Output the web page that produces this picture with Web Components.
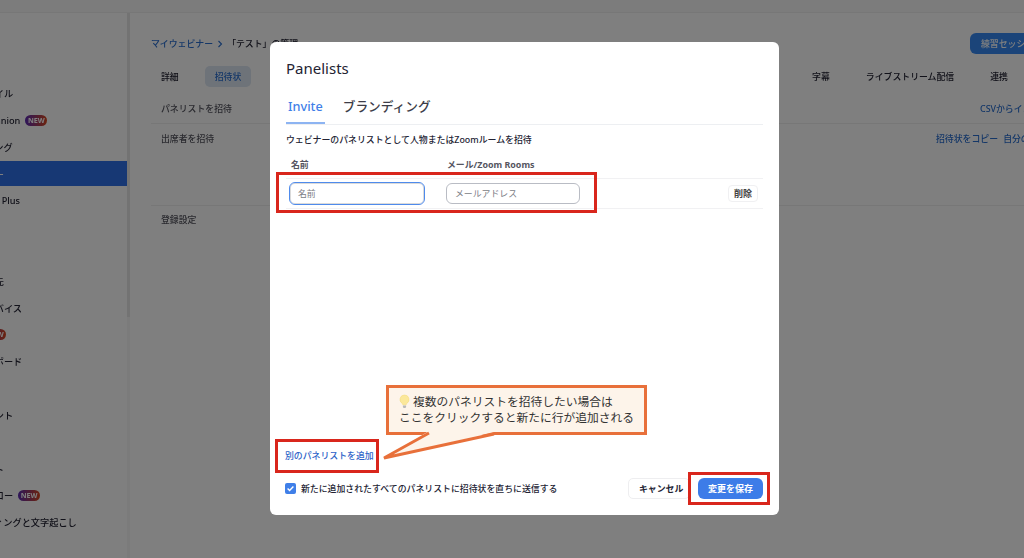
<!DOCTYPE html>
<html lang="ja">
<head>
<meta charset="utf-8">
<title>Panelists</title>
<style>
	html, body { margin: 0; height: 100%; }
	body {
		overflow: hidden;
		background: #fff;
		color: #232333;
		font-family: "Noto Sans", "Noto Sans CJK JP", sans-serif;
		filter: blur(.35px);
	}
	.app { display: flex; flex-direction: column; width: 1024px; height: 558px; }
	.body { display: flex; flex: 1; min-height: 0; }
</style>
</head>
<body>
<div class="app">
	<top-bar></top-bar>
	<div class="body">
		<side-nav>
			<side-item>プロファイル</side-item>
			<side-item badge>AI Companion</side-item>
			<side-item>ミーティング</side-item>
			<side-item active>ウェビナー</side-item>
			<side-item>Webinars Plus</side-item>
			<side-item></side-item>
			<side-item></side-item>
			<side-item>個人連絡先</side-item>
			<side-item>個人のデバイス</side-item>
			<side-item badge>Docs</side-item>
			<side-item>ホワイトボード</side-item>
			<side-item></side-item>
			<side-item>ドキュメント</side-item>
			<side-item></side-item>
			<side-item>コンタクト</side-item>
			<side-item badge>ワークフロー</side-item>
			<side-item>レコーディングと文字起こし</side-item>
		</side-nav>
		<webinar-page></webinar-page>
	</div>
</div>

<modal-layer>
	<panelist-modal></panelist-modal>
	<mark-box style="left:276px;top:172px;width:321px;height:41px"></mark-box>
	<mark-box style="left:275px;top:439px;width:104px;height:34px"></mark-box>
	<mark-box style="left:688px;top:472px;width:82px;height:33px"></mark-box>
	<note-callout>
		<span slot="first">複数のパネリストを招待したい場合は</span>
		<span slot="second">ここをクリックすると新たに行が追加される</span>
	</note-callout>
</modal-layer>

<script>
function shadow(el, html) {
	el.attachShadow({mode: 'open'}).innerHTML = html;
}

class TopBar extends HTMLElement {
	constructor() {
		super();
		shadow(this, `<style>
			:host { display: block; height: 12px; background: #f9f9f9; border-bottom: 1px solid #eeeeee; }
		</style>`);
	}
}

class SideNav extends HTMLElement {
	constructor() {
		super();
		shadow(this, `<style>
			:host {
				display: block;
				position: relative;
				flex: none;
				width: 127px;
				padding: 67px 3px 0 0;
				overflow: hidden;
			}
			.track { position: absolute; right: 0; top: 0; bottom: 0; width: 3px; background: #f6f6f6; }
			.thumb { height: 304px; background: #e6e6e6; }
		</style><slot></slot><div class="track"><div class="thumb"></div></div>`);
	}
}

class SideItem extends HTMLElement {
	constructor() {
		super();
		const badge = this.hasAttribute('badge') ? '<span class="new">NEW</span>' : '';
		shadow(this, `<style>
			:host {
				display: flex;
				align-items: center;
				height: 26.8px;
				font-size: 9.2px;
				font-weight: 500;
				color: #232333;
				white-space: nowrap;
			}
			:host([active]) { background: linear-gradient(#fff 0 .7px, #2f71e8 .7px calc(100% - .7px), #fff calc(100% - .7px)); color: #fff; }
			.label { display: flex; align-items: center; gap: 5px; margin-left: -42px; }
			.new {
				padding: 0 2.5px;
				height: 11px;
				line-height: 11px;
				border-radius: 6px;
				font-size: 7.2px;
				font-weight: 700;
				color: #fff;
				background: linear-gradient(90deg, #5b2bb5, #d9471c);
			}
		</style><div class="label"><span><slot></slot></span>${badge}</div>`);
	}
}

class WebinarPage extends HTMLElement {
	constructor() {
		super();
		shadow(this, `<style>
			:host {
				display: block;
				flex: none;
				width: 920px;
				padding-left: 21px;
				box-sizing: border-box;
				font-size: 8.9px;
				font-weight: 500;
				color: #232333;
				white-space: nowrap;
			}
			.crumb { display: flex; align-items: center; justify-content: space-between; height: 21px; margin-top: 20px; }
			.crumb > span { display: flex; align-items: center; gap: 4px; }
			a { color: #2a6fd0; }
			.practice {
				width: 80px;
				height: 21px;
				line-height: 21px;
				padding-left: 11px;
				box-sizing: border-box;
				border-radius: 6px;
				background: #3688f2;
				color: #fff;
			}
			.tabs { display: flex; align-items: center; height: 21px; margin-top: 12px; padding-left: 10px; }
			.on {
				margin-left: 26px;
				padding: 0 10px;
				height: 21px;
				line-height: 21px;
				border-radius: 5px;
				background: #dce6f3;
				color: #2a6fd0;
			}
			.right { margin-left: auto; display: flex; gap: 36px; padding-right: 42px; }
			.row { display: flex; justify-content: space-between; padding-left: 10px; color: #55555f; }
			.row.panel { height: 36px; line-height: 44px; border-bottom: 1px solid #efefef; }
			.row.guest { height: 81px; line-height: 30px; border-bottom: 1px solid #efefef; }
			.row.reg { line-height: 28px; }
			.links { display: flex; gap: 5px; width: 114px; }
			.csv { width: 70px; }
		</style>
		<div class="crumb">
			<span><a>マイウェビナー</a><svg width="6" height="8" viewBox="0 0 6 8"><path d="M1.5 1l3 3-3 3" fill="none" stroke="#2a6fd0" stroke-width="1.1"/></svg><span>「テスト」の管理</span></span>
			<div class="practice">練習セッションを開始</div>
		</div>
		<div class="tabs">
			<span>詳細</span><span class="on">招待状</span>
			<span class="right"><span>字幕</span><span>ライブストリーム配信</span><span>連携</span></span>
		</div>
		<div class="row panel"><span>パネリストを招待</span><a class="csv">CSVからインポート</a></div>
		<div class="row guest"><span>出席者を招待</span><span class="links"><a>招待状をコピー</a><a>自分のみ招待</a></span></div>
		<div class="row reg"><span>登録設定</span></div>`);
	}
}

class ModalLayer extends HTMLElement {
	constructor() {
		super();
		shadow(this, `<style>
			:host {
				position: fixed;
				inset: 0;
				display: block;
				background: rgba(0, 0, 0, .5);
			}
		</style><slot></slot>`);
	}
}

class TextField extends HTMLElement {
	constructor() {
		super();
		shadow(this, `<style>
			:host {
				display: flex;
				align-items: center;
				box-sizing: border-box;
				height: 21px;
				padding-left: 8px;
				border: 1px solid #b9bcc4;
				border-radius: 6px;
				font-size: 8.9px;
				color: #7b7d85;
				background: #fff;
			}
			:host([focused]) {
				height: 23px;
				border: 1.5px solid #4f8bec;
				box-shadow: inset 0 0 0 1px #dadada;
			}
		</style><slot></slot>`);
	}
}

class PanelistModal extends HTMLElement {
	constructor() {
		super();
		shadow(this, `<style>
			:host {
				position: absolute;
				left: 270px;
				top: 42px;
				width: 509px;
				height: 473px;
				box-sizing: border-box;
				display: flex;
				flex-direction: column;
				padding: 15px 16px 16px;
				border-radius: 6px;
				background: #fff;
				color: #232333;
				white-space: nowrap;
			}
			h2 { margin: 0; font-size: 15px; line-height: 22px; font-weight: 400; }
			.tabs { display: flex; gap: 18px; height: 34px; margin-top: 11px; border-bottom: 1px solid #edeff2; }
			.tab { font-size: 12.7px; line-height: 32px; font-weight: 500; color: #3d3d48; }
			.tab.on { padding: 0 2px; height: 34px; box-sizing: border-box; margin-bottom: -1px; color: #3f7fe8; border-bottom: 2px solid #8db4f2; }
			.hint { margin-top: 7px; font-size: 8.9px; line-height: 16px; font-weight: 500; }
			.grid { display: grid; grid-template-columns: 160px 1fr auto; align-items: center; }
			.head { height: 27px; margin-top: 4px; padding-bottom: 2px; box-sizing: border-box; border-bottom: 1px solid #f1f1f3; font-size: 8.9px; font-weight: 700; color: #55555f; }
			.head span:first-child { padding-left: 5px; }
			.head span:nth-child(2) { padding-left: 1px; }
			.line { height: 30px; box-sizing: border-box; border-bottom: 1px solid #f1f1f3; }
			.name { width: 136px; margin-left: 3px; }
			.mail { width: 134px; }
			.del {
				margin-right: 5px;
				padding: 0 5px;
				height: 17px;
				line-height: 15px;
				box-sizing: border-box;
				border: 1px solid #f0f0f2;
				border-radius: 4px;
				font-size: 9px;
				font-weight: 700;
				color: #444;
			}
			.add { margin: auto 0 0 -1px; font-size: 8.9px; line-height: 14px; font-weight: 500; color: #2d63c8; }
			.foot { display: flex; align-items: center; height: 21px; margin-top: 15px; }
			.check { display: flex; align-items: center; gap: 5px; font-size: 8.9px; font-weight: 500; }
			.box { display: block; width: 11px; height: 11px; border-radius: 2px; background: #3f7fe8; margin-left: -1px; }
			.cancel {
				margin-left: auto;
				width: 62px;
				height: 21px;
				line-height: 20px;
				box-sizing: border-box;
				padding-left: 10px;
				border: 1px solid #eeeef0;
				border-radius: 5px;
				font-size: 8.9px;
				font-weight: 700;
			}
			.save {
				margin-left: 8px;
				width: 65px;
				height: 21px;
				line-height: 21px;
				text-align: center;
				border-radius: 6px;
				background: #3d7ce8;
				color: #fff;
				font-size: 9px;
				font-weight: 700;
			}
		</style>
		<h2>Panelists</h2>
		<div class="tabs"><span class="tab on">Invite</span><span class="tab">ブランディング</span></div>
		<div class="hint">ウェビナーのパネリストとして人物またはZoomルームを招待</div>
		<div class="grid head"><span>名前</span><span>メール/Zoom Rooms</span></div>
		<div class="grid line">
			<text-field class="name" focused>名前</text-field>
			<text-field class="mail">メールアドレス</text-field>
			<span class="del">削除</span>
		</div>
		<div class="add">別のパネリストを追加</div>
		<div class="foot">
			<span class="check">
				<svg class="box" viewBox="0 0 11 11"><path d="M2.6 5.6l2 2 3.8-4" fill="none" stroke="#fff" stroke-width="1.4"/></svg>
				新たに追加されたすべてのパネリストに招待状を直ちに送信する
			</span>
			<span class="cancel">キャンセル</span>
			<span class="save">変更を保存</span>
		</div>`);
	}
}

class MarkBox extends HTMLElement {
	constructor() {
		super();
		shadow(this, `<style>
			:host { position: absolute; box-sizing: border-box; border: 3px solid #d9261c; }
		</style>`);
	}
}

class NoteCallout extends HTMLElement {
	constructor() {
		super();
		shadow(this, `<style>
			:host {
				position: absolute;
				left: 386px;
				top: 385px;
				width: 261px;
				height: 50px;
				box-sizing: border-box;
				display: flex;
				flex-direction: column;
				justify-content: center;
				padding: 0 0 2px 10px;
				border: 3px solid #e8703a;
				background: #fdf4ea;
				color: #333;
				font-size: 11.75px;
				line-height: 16px;
				white-space: nowrap;
			}
			.tail { position: absolute; left: -4px; top: 44px; overflow: visible; }
			.first { display: flex; align-items: center; gap: 3px; }
		</style>
		<svg class="tail" width="120" height="32" viewBox="0 0 120 32">
			<path d="M44 -1L-1 26 109 0V-1Z" fill="#fdf4ea"/>
			<path d="M44 1L-1 26 109 2" fill="none" stroke="#e8703a" stroke-width="3"/>
		</svg>
		<div class="first">
			<svg width="11" height="15" viewBox="0 0 11 15">
				<path d="M5.5 1a4.5 4.5 0 0 0-2.6 8.2c.6.5.8 1 .9 1.6h3.4c.1-.6.3-1.1.9-1.6A4.5 4.5 0 0 0 5.5 1z" fill="#fbe89a" stroke="#f2d879" stroke-width=".5"/>
				<path d="M3.9 11.4h3.2v1.6c0 .5-.7 1-1.6 1s-1.6-.5-1.6-1z" fill="#b9b9b9"/>
			</svg>
			<slot name="first"></slot>
		</div>
		<div><slot name="second"></slot></div>`);
	}
}

customElements.define('top-bar', TopBar);
customElements.define('side-nav', SideNav);
customElements.define('side-item', SideItem);
customElements.define('webinar-page', WebinarPage);
customElements.define('modal-layer', ModalLayer);
customElements.define('text-field', TextField);
customElements.define('panelist-modal', PanelistModal);
customElements.define('mark-box', MarkBox);
customElements.define('note-callout', NoteCallout);
</script>
</body>
</html>
